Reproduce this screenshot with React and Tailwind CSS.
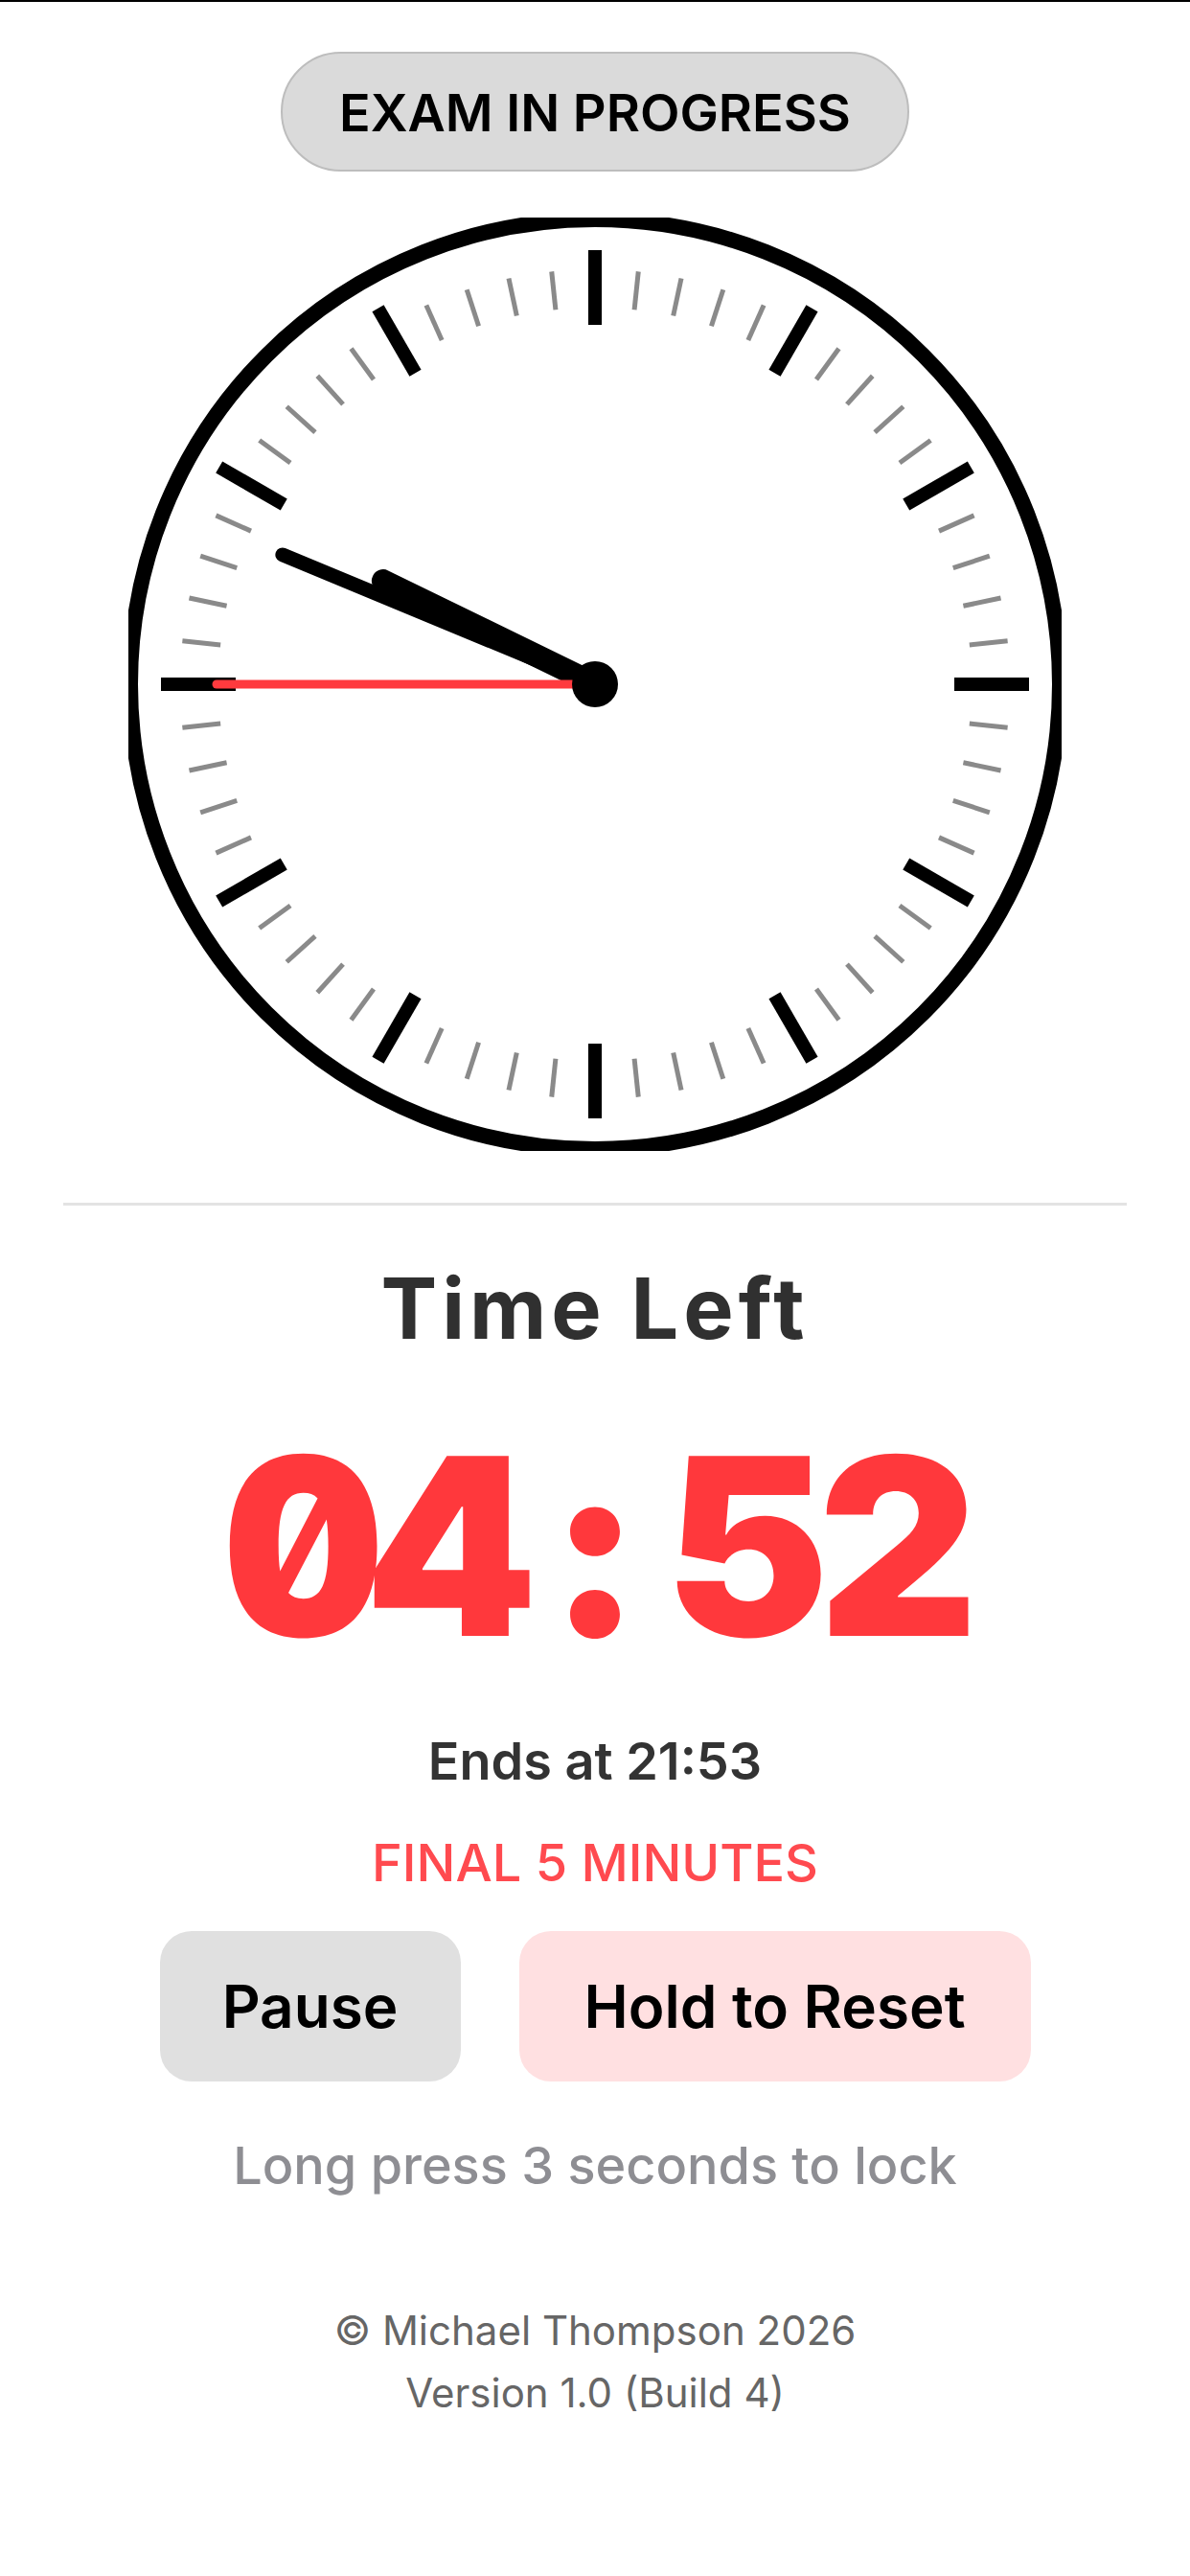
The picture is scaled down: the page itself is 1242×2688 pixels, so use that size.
export default function App() {
  const ticks = [];
  for (let i = 0; i < 60; i++) {
    const a = (i * 6 * Math.PI) / 180;
    const major = i % 5 === 0;
    const r1 = major ? 375 : 393;
    const r2 = major ? 453 : 433;
    const s = Math.sin(a);
    const c = Math.cos(a);
    ticks.push(
      <line
        key={i}
        x1={r1 * s}
        y1={-r1 * c}
        x2={r2 * s}
        y2={-r2 * c}
        stroke={major ? "#000000" : "#8a8a8a"}
        strokeWidth={major ? 14 : 5}
      />
    );
  }
  const hand = (deg, len) => {
    const a = (deg * Math.PI) / 180;
    return [len * Math.sin(a), -len * Math.cos(a)];
  };
  const [hx, hy] = hand(296, 246);
  const [mx, my] = hand(292.5, 353);
  const [sx, sy] = hand(270, 395);

  const chars = ["0", "4", ":", "5", "2"];

  return (
    <div className="min-h-[2688px] w-full bg-white font-['Inter',sans-serif] flex flex-col items-center">
      <div className="h-[2px] w-full bg-black" />

      <div className="mt-[52px] h-[125px] w-[656px] rounded-full border-2 border-[#bdbdbd] bg-[#dadada] flex items-center justify-center pt-[2px] text-[54px] leading-none font-semibold text-black">
        EXAM IN PROGRESS
      </div>

      <svg
        className="mt-[48px]"
        width="974"
        height="974"
        viewBox="-487 -487 974 974"
      >
        <circle cx="0" cy="0" r="485" fill="#ffffff" stroke="#000000" strokeWidth="16" />
        {ticks}
        <line x1="0" y1="0" x2={mx} y2={my} stroke="#000000" strokeWidth="15" strokeLinecap="round" />
        <line x1="0" y1="0" x2={hx} y2={hy} stroke="#000000" strokeWidth="24" strokeLinecap="round" />
        <line x1="0" y1="0" x2={sx} y2={sy} stroke="#ff3a3e" strokeWidth="9" strokeLinecap="round" />
        <circle cx="0" cy="0" r="24" fill="#000000" />
      </svg>

      <div className="mt-[54px] h-[3px] w-[1110px] bg-[#e3e3e3]" />

      <div className="mt-[63px] text-[88px] leading-none font-bold tracking-[5px] text-[#303030]">
        Time Left
      </div>

      <div className="mt-[75px] flex text-[258px] leading-none font-black text-[#ff383c] slashed-zero tabular-nums">
        {chars.map((ch, i) => (
          <span key={i} className="w-[155px] text-center">
            {ch}
          </span>
        ))}
      </div>

      <div className="mt-[69px] text-[54px] leading-none font-semibold text-[#333333]">
        Ends at 21:53
      </div>

      <div className="mt-[52px] text-[54px] leading-none font-medium text-[#ff4a4f]">
        FINAL 5 MINUTES
      </div>

      <div className="mt-[44px] flex gap-[61px]">
        <button className="h-[157px] w-[314px] rounded-[33px] bg-[#e0e0e0] flex items-center justify-center text-[62px] leading-none font-semibold text-black">
          Pause
        </button>
        <button className="h-[157px] w-[534px] rounded-[33px] bg-[#ffe0e1] flex items-center justify-center text-[62px] leading-none font-semibold text-black">
          Hold to Reset
        </button>
      </div>

      <div className="mt-[61px] text-[54px] leading-none font-medium text-[#8e8e93]">
        Long press 3 seconds to lock
      </div>

      <div className="mt-[112px] flex flex-col items-center text-[42px] leading-[65px] font-normal text-[#666666]">
        <div>© Michael Thompson 2026</div>
        <div>Version 1.0 (Build 4)</div>
      </div>
    </div>
  );
}
